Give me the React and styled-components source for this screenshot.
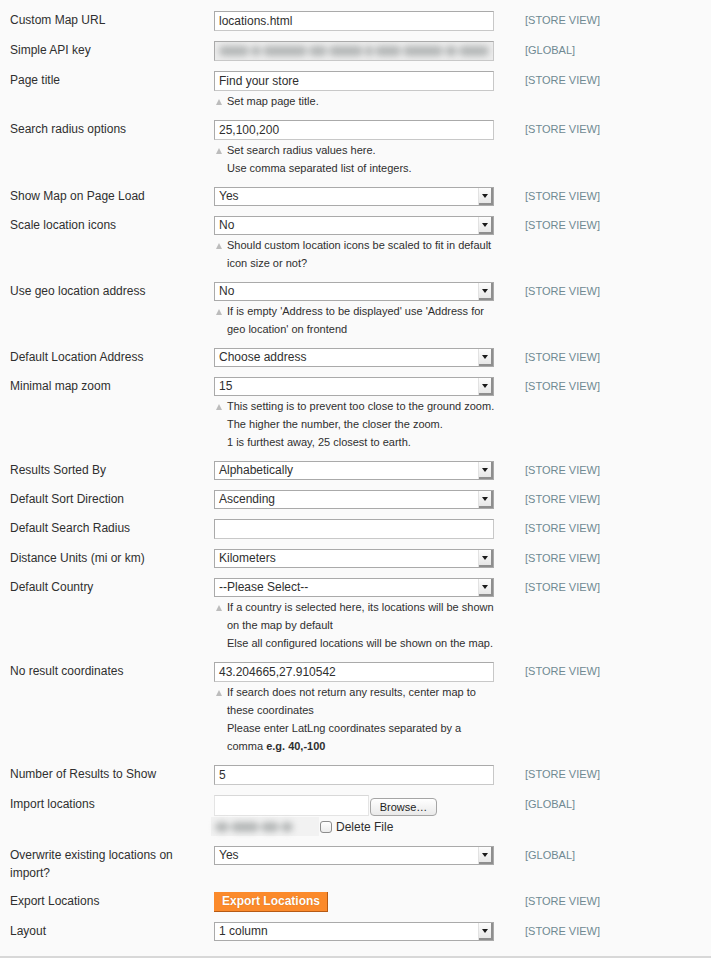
import styled, { createGlobalStyle } from "styled-components"

const GlobalStyle = createGlobalStyle`
  body {
    margin: 0;
    background: #fff;
    font-family: "Liberation Sans", Arial, sans-serif;
    color: #2f2f2f;
  }
`

const STORE = "[STORE VIEW]"
const GLOBAL = "[GLOBAL]"

// hint lines are broken where the original admin page breaks them
const rows = [
  { label: "Custom Map URL", type: "text", value: "locations.html", scope: STORE },
  { label: "Simple API key", type: "secret", scope: GLOBAL },
  { label: "Page title", type: "text", value: "Find your store", scope: STORE, hints: ["Set map page title."] },
  {
    label: "Search radius options",
    type: "text",
    value: "25,100,200",
    scope: STORE,
    hints: ["Set search radius values here.", "Use comma separated list of integers."],
  },
  { label: "Show Map on Page Load", type: "select", value: "Yes", scope: STORE },
  {
    label: "Scale location icons",
    type: "select",
    value: "No",
    scope: STORE,
    hints: ["Should custom location icons be scaled to fit in default", "icon size or not?"],
  },
  {
    label: "Use geo location address",
    type: "select",
    value: "No",
    scope: STORE,
    hints: ["If is empty 'Address to be displayed' use 'Address for", "geo location' on frontend"],
  },
  { label: "Default Location Address", type: "select", value: "Choose address", scope: STORE },
  {
    label: "Minimal map zoom",
    type: "select",
    value: "15",
    scope: STORE,
    hints: [
      "This setting is to prevent too close to the ground zoom.",
      "The higher the number, the closer the zoom.",
      "1 is furthest away, 25 closest to earth.",
    ],
  },
  { label: "Results Sorted By", type: "select", value: "Alphabetically", scope: STORE },
  { label: "Default Sort Direction", type: "select", value: "Ascending", scope: STORE },
  { label: "Default Search Radius", type: "text", value: "", scope: STORE },
  { label: "Distance Units (mi or km)", type: "select", value: "Kilometers", scope: STORE },
  {
    label: "Default Country",
    type: "select",
    value: "--Please Select--",
    scope: STORE,
    hints: [
      "If a country is selected here, its locations will be shown",
      "on the map by default",
      "Else all configured locations will be shown on the map.",
    ],
  },
  {
    label: "No result coordinates",
    type: "text",
    value: "43.204665,27.910542",
    scope: STORE,
    hints: [
      "If search does not return any results, center map to",
      "these coordinates",
      "Please enter LatLng coordinates separated by a",
      <>
        comma <b>e.g. 40,-100</b>
      </>,
    ],
  },
  { label: "Number of Results to Show", type: "text", value: "5", scope: STORE },
  { label: "Import locations", type: "file", scope: GLOBAL },
  { label: "Overwrite existing locations on import?", type: "select", value: "Yes", scope: GLOBAL },
  { label: "Export Locations", type: "button", value: "Export Locations", scope: STORE },
  { label: "Layout", type: "select", value: "1 column", scope: STORE },
]

function Smudge({ widths }) {
  return (
    <SmudgeRow>
      {widths.map((w, i) => (
        <Blob key={i} style={{ width: w }} />
      ))}
    </SmudgeRow>
  )
}

function Field({ row }) {
  if (row.type === "text") return <TextBox>{row.value}</TextBox>
  if (row.type === "secret")
    return (
      <TextBox $muted>
        <Smudge widths={[30, 10, 44, 18, 34, 8, 26, 40, 12, 30]} />
      </TextBox>
    )
  if (row.type === "select")
    return (
      <SelectBox>
        <SelectText>{row.value}</SelectText>
        <Arrow />
      </SelectBox>
    )
  if (row.type === "button") return <OrangeButton>{row.value}</OrangeButton>
  if (row.type === "file")
    return (
      <FileBlock>
        <FileLine>
          <FileBox />
          <BrowseButton>Browse…</BrowseButton>
        </FileLine>
        <FileLine>
          <FileName>
            <Smudge widths={[14, 28, 18, 12]} />
          </FileName>
          <CheckBox />
          <DeleteText>Delete File</DeleteText>
        </FileLine>
      </FileBlock>
    )
  return null
}

function App() {
  return (
    <>
      <GlobalStyle />
      <Fieldset>
        {rows.map((row) => (
          <Row key={row.label}>
            <Label>{row.label}</Label>
            <Value>
              <Field row={row} />
              {row.hints && (
                <Hint>
                  <HintIcon />
                  <HintLines>
                    {row.hints.map((h, i) => (
                      <div key={i}>{h}</div>
                    ))}
                  </HintLines>
                </Hint>
              )}
            </Value>
            <Scope>{row.scope}</Scope>
          </Row>
        ))}
      </Fieldset>
    </>
  )
}

export default App

const Fieldset = styled.div`
  background: #fafafa;
  border-bottom: 2px solid #d8d8d8;
  padding: 6px 0 10px;
`

const Row = styled.div`
  display: grid;
  grid-template-columns: 204px 280px 1fr;
  padding: 5px 0 5px 10px;
  align-items: start;
`

const Label = styled.div`
  font-size: 12px;
  line-height: 18px;
  color: #2f2f2f;
  padding-right: 20px;
`

const Value = styled.div`
  display: flex;
  flex-direction: column;
`

const Scope = styled.div`
  font-size: 11px;
  line-height: 18px;
  color: #6f8992;
  padding-left: 31px;
`

const TextBox = styled.div`
  box-sizing: border-box;
  height: 20px;
  width: 280px;
  border: 1px solid #aaa;
  border-color: #aaa #c8c8c8 #c8c8c8 #aaa;
  background: ${({ $muted }) => ($muted ? "#ececec" : "#fff")};
  padding: 0 4px;
  font-size: 12px;
  line-height: 18px;
  color: #2f2f2f;
  overflow: hidden;
  display: flex;
  align-items: center;
`

const SmudgeRow = styled.div`
  display: flex;
  gap: 2px;
  align-items: center;
  filter: blur(3px);
  width: 100%;
`

const Blob = styled.span`
  display: block;
  height: 10px;
  border-radius: 5px;
  background: #b5b8b8;
  flex-shrink: 0;
`

const SelectBox = styled.div`
  box-sizing: border-box;
  height: 19px;
  width: 280px;
  border: 1px solid #aaa;
  background: #fff;
  display: flex;
  align-items: stretch;
`

const SelectText = styled.span`
  flex: 1;
  font-size: 12px;
  line-height: 17px;
  padding-left: 4px;
  color: #2f2f2f;
  white-space: nowrap;
  overflow: hidden;
`

const Arrow = styled.span`
  width: 15px;
  box-sizing: border-box;
  background: linear-gradient(#fdfdfd, #e4e4e4);
  border-left: 1px solid #e2e2e2;
  box-shadow: inset -2px -2px 0 #8e8e8e;
  position: relative;
  &::after {
    content: "";
    position: absolute;
    left: 3px;
    top: 6px;
    border-left: 3.5px solid transparent;
    border-right: 3.5px solid transparent;
    border-top: 4px solid #1a1a1a;
  }
`

const Hint = styled.div`
  display: flex;
  margin-top: 1px;
  font-size: 11px;
  line-height: 18px;
  color: #2f2f2f;
  b {
    font-weight: bold;
  }
`

const HintIcon = styled.span`
  width: 13px;
  flex-shrink: 0;
  position: relative;
  &::before {
    content: "";
    position: absolute;
    left: 2px;
    top: 7px;
    border-left: 3.5px solid transparent;
    border-right: 3.5px solid transparent;
    border-bottom: 6px solid #bcbcbc;
  }
`

const HintLines = styled.div`
  flex: 1;
  white-space: nowrap;
`

const OrangeButton = styled.div`
  align-self: flex-start;
  box-sizing: border-box;
  height: 20px;
  padding: 0 7px 0 8px;
  background: #fb8a2b;
  border-right: 1px solid #b65a14;
  border-bottom: 1px solid #b65a14;
  color: #fff;
  font-size: 12px;
  font-weight: bold;
  line-height: 19px;
  text-shadow: 0 0 1px rgba(160, 80, 10, 0.5);
`

const FileBlock = styled.div`
  display: flex;
  flex-direction: column;
  gap: 1px;
`

const FileLine = styled.div`
  display: flex;
  align-items: center;
`

const FileBox = styled.div`
  box-sizing: border-box;
  width: 155px;
  height: 21px;
  background: #fff;
  border: 1px solid #e4e4e4;
  border-top-color: #d8d8d8;
`

const BrowseButton = styled.div`
  box-sizing: border-box;
  margin: 2px 0 0 1px;
  width: 67px;
  height: 18px;
  border: 1px solid #a5a5a5;
  border-radius: 4px;
  background: linear-gradient(#ffffff, #e9e9e9);
  font-size: 11px;
  line-height: 16px;
  text-align: center;
  color: #1d1d1d;
`

const FileName = styled.div`
  margin-left: -3px;
  width: 108px;
  height: 19px;
  background: #f2f2f2;
  display: flex;
  align-items: center;
  padding: 0 4px;
  box-sizing: border-box;
`

const CheckBox = styled.span`
  box-sizing: border-box;
  width: 12px;
  height: 12px;
  margin-left: 1px;
  border: 1px solid #8d8d8d;
  border-radius: 3px;
  background: linear-gradient(#fff, #ececec);
`

const DeleteText = styled.span`
  margin-left: 4px;
  font-size: 12px;
  line-height: 18px;
  color: #2f2f2f;
`
